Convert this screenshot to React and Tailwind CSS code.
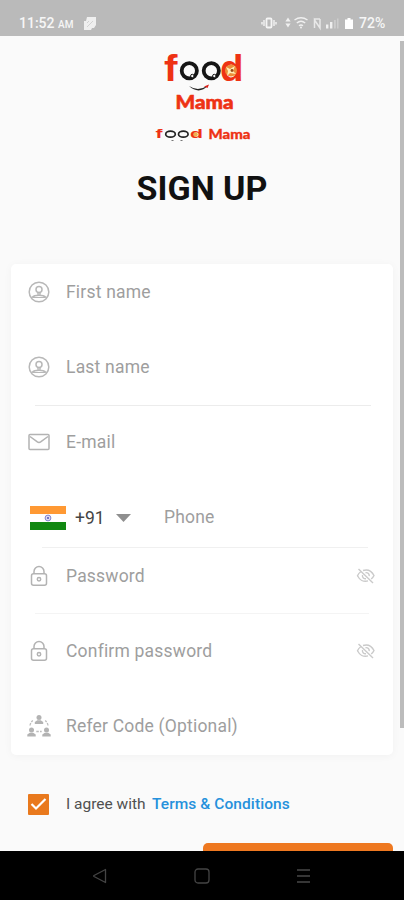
import React, { useState } from "react";

const UserIcon = () => (
  <svg width="22" height="22" viewBox="0 0 22 22" fill="none" stroke="#b8b8b8" strokeWidth="1.5">
    <circle cx="11" cy="11" r="9.8" />
    <circle cx="11" cy="8.4" r="3" />
    <path d="M10 11.400v2.200M12 11.400v2.200M4 16.500c1.500-1.500 3.500-2.200 7-2.200s5.500.7 7 2.200" />
    <path d="M4.500 16.500h13" strokeWidth="1" />
  </svg>
);

const MailIcon = () => (
  <svg width="22" height="18" viewBox="0 0 22 18" fill="none" stroke="#b3b3b3" strokeWidth="1.5">
    <rect x="1" y="1.5" width="20" height="15" rx="1" />
    <path d="M2 3.500l7 5.200q2 1.400 4 0l7-5.200" />
  </svg>
);

const LockIcon = () => (
  <svg width="22" height="22" viewBox="0 0 22 22" fill="none" stroke="#b3b3b3" strokeWidth="1.5">
    <rect x="3.5" y="8.8" width="15" height="11.5" rx="2" />
    <path d="M6 8.500V6.500a5 5 0 0 1 10 0v2" />
    <circle cx="11" cy="14.3" r="1.7" />
  </svg>
);

const ReferIcon = () => (
  <svg width="24" height="24" viewBox="0 0 24 24" fill="#b3b3b3">
    <circle cx="12" cy="3.5" r="2.5" />
    <path d="M7.800 10v-2l2.500-1.800h3.400L16.200 8v2z" />
    <circle cx="4.5" cy="16" r="2.5" />
    <path d="M.3 22.500v-2l2.500-1.800h3.400l2.500 1.800v2z" />
    <circle cx="19.5" cy="16" r="2.5" />
    <path d="M15.300 22.500v-2l2.500-1.800h3.400l2.500 1.800v2z" />
    <path
      d="M3 11.500q.5-3 2.800-5M21 11.500q-.5-3-2.800-5M9.300 17.500h5.400"
      fill="none"
      stroke="#bdbdbd"
      strokeWidth="1.3"
      strokeDasharray="2.5 1.2"
    />
  </svg>
);

const EyeOffIcon = () => (
  <svg width="20" height="18" viewBox="0 0 20 18" fill="none" stroke="#cacaca" strokeWidth="1.4">
    <path d="M2.500 2L17 16" />
    <path d="M7 3.500c5-1.600 9 1.200 11 5-.7 1.500-1.600 2.600-2.800 3.500M4.700 4.800C3.300 5.800 2.200 7.100 1.500 8.700c2 4 6 6.500 10.500 5.200" />
    <path d="M9.500 5.700c2.600-.3 4 1.500 3.700 3.500M6.500 8c-.5 2.500 1.500 4 3.500 3.800" />
  </svg>
);

const Flag = () => (
  <svg width="36" height="24" viewBox="0 0 36 24">
    <rect width="36" height="8" fill="#ff9933" />
    <rect y="8" width="36" height="8" fill="#fff" />
    <rect y="16" width="36" height="8" fill="#118811" />
    <circle cx="18" cy="12" r="2.9" fill="#dcdcf5" stroke="#8585cc" strokeWidth="1" />
    <circle cx="18" cy="12" r="1" fill="#5555b5" />
  </svg>
);

const Logo = () => (
  <svg
    width="80"
    height="60"
    viewBox="0 0 80 60"
    className="overflow-visible font-['Liberation_Sans',sans-serif] font-bold"
  >
    <text x="1" y="28.5" fontSize="36" fill="#ee3214" textLength="13.5" lengthAdjust="spacingAndGlyphs">
      f
    </text>
    <text x="57" y="28.5" fontSize="36" fill="#ee3214" textLength="23.5" lengthAdjust="spacingAndGlyphs">
      d
    </text>
    <g fill="none" stroke="#151515" strokeWidth="3.8">
      <circle cx="26.3" cy="18.8" r="7.6" />
      <circle cx="48.3" cy="18.8" r="7.6" />
    </g>
    <g fill="#fafafa" stroke="#151515" strokeWidth="1">
      <circle cx="29.3" cy="24" r="1.7" />
      <circle cx="51.3" cy="24" r="1.7" />
    </g>
    <circle cx="68" cy="18.5" r="6" fill="#ec8f3a" />
    <path d="M63 15l4 2 5-3-2 5 3 3-6-1-3 3 1-5z" fill="#fff0b8" />
    <circle cx="69" cy="18.5" r="1.4" fill="#9a4b16" />
    <path d="M26 34q9 6 19-.5q-9 9.500-19 .5" fill="#222" />
    <path d="M41 34.500l5-2-1.500 3.500z" fill="#d9201a" />
    <text
      x="12.5"
      y="56.8"
      fontSize="19.5"
      fill="#ee3214"
      stroke="#ee3214"
      strokeWidth="0.6"
      textLength="58"
      lengthAdjust="spacingAndGlyphs"
      className="font-['Lato',sans-serif] font-black"
    >
      Mama
    </text>
  </svg>
);

const SmallLogo = () => (
  <svg
    width="96"
    height="16"
    viewBox="0 0 96 16"
    className="overflow-visible font-['Liberation_Sans',sans-serif] font-bold"
  >
    <text x="0.5" y="12" fontSize="13" fill="#ee3214" textLength="7" lengthAdjust="spacingAndGlyphs">
      f
    </text>
    <g fill="none" stroke="#222" strokeWidth="1.7">
      <ellipse cx="15.5" cy="8.2" rx="4.8" ry="3" />
      <ellipse cx="28.3" cy="8.2" rx="4.8" ry="3" />
    </g>
    <text x="35" y="12" fontSize="13" fill="#ee3214" textLength="13" lengthAdjust="spacingAndGlyphs">
      d
    </text>
    <circle cx="40.5" cy="8.5" r="2.2" fill="#eeb24c" />
    <path d="M16.500 14.500h2M25.500 14.500h2" stroke="#777" />
    <text
      x="53.5"
      y="12.5"
      fontSize="14"
      fill="#ee3214"
      stroke="#ee3214"
      strokeWidth="0.3"
      textLength="42"
      lengthAdjust="spacingAndGlyphs"
      className="font-['Lato',sans-serif] font-black"
    >
      Mama
    </text>
  </svg>
);

const StatusIcons = () => (
  <svg width="94" height="16" viewBox="0 0 94 16" fill="#f0f0f0">
    <rect x="5.5" y="3.5" width="5" height="9" rx="1" fill="none" stroke="#f4f4f4" strokeWidth="1.8" />
    <path d="M3 5v6M1 7v2.500M13 5v6M15 7v2.500" stroke="#f0f0f0" strokeWidth="1.5" />
    <path d="M27 2.500l2.600 4h-5.200zM27 12.500l2.600-4h-5.200z" />
    <g fill="none" stroke="#f0f0f0" strokeWidth="1.4">
      <path d="M33.500 5q6.500-4.500 13 0M35.800 8q4.200-3.500 8.400 0M38 10.800q2-1.600 4 0" />
    </g>
    <circle cx="40" cy="12.5" r="1" />
    <path d="M53.500 13V5l5.500 8V4M53 4h6" fill="none" stroke="#e8e8e8" strokeWidth="1.5" />
    <rect x="65" y="9.5" width="2.4" height="4" />
    <rect x="69" y="7" width="2.4" height="6.5" />
    <rect x="73" y="5" width="1.8" height="8.5" opacity=".35" />
    <rect x="76" y="3.5" width="1.5" height="10" opacity=".35" />
    <path d="M86.500 3h3v1.500H92V14h-8V4.500h2.500z" fill="#fff" />
  </svg>
);

const StatusBar = () => (
  <div className="flex h-9 shrink-0 items-center bg-[#bababa] pt-[10px] pl-[19px] pr-[18px] text-[14px] leading-none font-medium text-[#f6f6f6]">
    <span className="w-[36px] whitespace-nowrap">11:52</span>
    <span className="ml-[3px] pt-[3px] text-[10px]">AM</span>
    <svg className="ml-[11px]" width="12" height="13" viewBox="0 0 12 13">
      <path d="M3 0h9v8l-2 3H8l-1 2H0V4h2z" fill="#efefef" />
      <path d="M3 10l6-6M3 6l2-2" stroke="#d2d2d2" />
    </svg>
    <div className="ml-auto flex items-center gap-[4px]">
      <StatusIcons />
      <span className="w-[27px] whitespace-nowrap">72%</span>
    </div>
  </div>
);

const Field = ({ icon, name, placeholder, secret, className = "" }) => {
  const [value, setValue] = useState("");

  return (
    <div className={`flex h-14 items-center ${className}`}>
      <span className="flex w-[55px] shrink-0 justify-center">{icon}</span>
      <input
        type={secret ? "password" : "text"}
        name={name}
        value={value}
        placeholder={placeholder}
        onChange={(e) => setValue(e.target.value)}
        className="min-w-0 flex-1 bg-transparent text-[17.5px] tracking-[0.2px] text-gray-700 outline-none placeholder:text-[#9e9e9e]"
      />
      {secret && (
        <button type="button" className="mr-[17px]">
          <EyeOffIcon />
        </button>
      )}
    </div>
  );
};

const App = () => {
  const [agree, setAgree] = useState(true);

  return (
    <div className="flex h-[900px] w-[404px] flex-col overflow-hidden bg-[#fafafa] font-['Roboto',sans-serif]">
      <StatusBar />

      <div className="flex min-h-0 flex-1">
        {/* Sign up form */}
        <main className="flex w-[400px] shrink-0 flex-col overflow-hidden">
          <div className="ml-[163px] mt-[16px] h-[60px]">
            <Logo />
          </div>
          <div className="ml-[155px] mt-[14px] h-4">
            <SmallLogo />
          </div>
          <h1 className="mt-[26px] w-[404px] text-center text-[34px] leading-[40px] font-bold text-[#111]">
            SIGN UP
          </h1>

          <form className="ml-[11px] mt-[56px] h-[491px] w-[382px] shrink-0 rounded-[5px] bg-white shadow-[0_1px_8px_rgba(0,0,0,0.04)]">
            <Field icon={<UserIcon />} name="firstName" placeholder="First name" />
            <Field icon={<UserIcon />} name="lastName" placeholder="Last name" className="mt-[19px]" />
            <div className="ml-6 mr-[22px] mt-[10px] h-px bg-[#ececec]" />
            <Field icon={<MailIcon />} name="email" placeholder="E-mail" className="mt-2" />

            <div className="mt-[19px] flex h-14 items-center pt-[2px] pl-[19px]">
              <Flag />
              <span className="ml-[9px] w-[30px] text-[17.5px] text-[#444]">+91</span>
              <svg className="ml-[11px]" width="15" height="8" viewBox="0 0 15 8">
                <path d="M0 0h15L7.500 8z" fill="#8f8f8f" />
              </svg>
              <input
                name="phone"
                placeholder="Phone"
                className="-mt-[2px] ml-[33px] w-[190px] text-[17.5px] tracking-[0.2px] text-gray-700 outline-none placeholder:text-[#9e9e9e]"
              />
            </div>
            <div className="ml-[31px] mr-[25px] mt-[2px] h-px bg-[#f0f0f0]" />

            <Field icon={<LockIcon />} name="password" placeholder="Password" secret />
            <div className="mx-6 mt-[9px] h-px bg-[#f4f4f4]" />
            <Field icon={<LockIcon />} name="confirm" placeholder="Confirm password" secret className="mt-[9px]" />
            <Field icon={<ReferIcon />} name="refer" placeholder="Refer Code (Optional)" className="mt-[19px]" />
          </form>

          {/* Terms */}
          <div className="ml-[28px] mt-[39px] flex h-[21px] shrink-0 items-center">
            <button
              type="button"
              onClick={() => setAgree(!agree)}
              className="flex h-[21px] w-[21px] items-center justify-center rounded-[1px] bg-[#e9791d]"
            >
              {agree && (
                <svg width="17" height="15" viewBox="0 0 17 15" fill="none" stroke="#fff" strokeWidth="2.2">
                  <path d="M1.500 7l4.500 4.500L15.500 2" />
                </svg>
              )}
            </button>
            <span className="ml-[17px] w-[80px] pt-px whitespace-nowrap text-[15.5px] text-[#505050]">I agree with</span>
            <a href="#terms" className="ml-[6px] pt-px text-[15.5px] font-medium tracking-[0.08px] text-[#2591dc]">
              Terms &amp; Conditions
            </a>
          </div>

          <button
            type="button"
            aria-label="Sign up"
            className="ml-[203px] mt-[28px] h-12 w-[190px] shrink-0 rounded-[5px] bg-[#ee7820]"
          />
        </main>

        {/* Scrollbar */}
        <div className="mt-[5px] h-[687px] w-1 bg-[#bcbcbc]" />
      </div>

      {/* Android navigation */}
      <nav className="flex h-[49px] shrink-0 items-center bg-black pl-[92px]">
        <svg width="16" height="16" viewBox="0 0 16 16" fill="none" stroke="#444" strokeWidth="1.3">
          <path d="M13.500 1.500v13L2 8.500q-.8-.5 0-1z" strokeLinejoin="round" />
        </svg>
        <svg className="ml-[86px]" width="16" height="16" viewBox="0 0 16 16" fill="none" stroke="#444" strokeWidth="1.3">
          <rect x="1" y="1" width="14" height="14" rx="3" />
        </svg>
        <svg className="ml-[86px]" width="15" height="16" viewBox="0 0 15 16" stroke="#484848" strokeWidth="1.5">
          <path d="M1 2h13M1 8h13M1 14h13" />
        </svg>
      </nav>
    </div>
  );
};

export default App;
